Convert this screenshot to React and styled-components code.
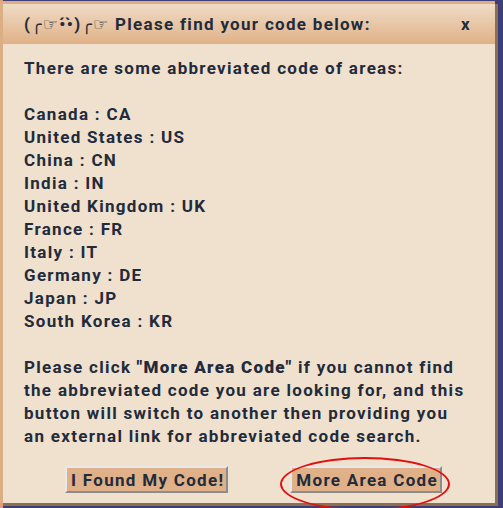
import React from 'react';
import styled, {createGlobalStyle} from 'styled-components';

const Global = createGlobalStyle`
    html, body {
        margin: 0;
        padding: 0;
        background: #4b4f9c;
    }
    body {
        font-family: Roboto, "DejaVu Sans", sans-serif;
    }
`;

const Page = styled.div`
    width: 503px;
    height: 508px;
    padding: 1px 0 0 0;
    box-sizing: border-box;
    background: linear-gradient(to right, #e49a80 0 3px, #3e3e78 3px);
`;

const Dialog = styled.div`
    position: relative;
    width: 495px;
    height: 502px;
    box-sizing: border-box;
    border-top: 3px solid #dcae85;
    border-left: 3px solid #dcae85;
    background: #f0e0ce;
    box-shadow: 3px 3px 0 #8a7050;
    color: #222b3b;
    font-weight: 700;
    font-size: 17px;
    letter-spacing: 1.3px;
    display: flex;
    flex-direction: column;
`;

const Header = styled.div`
    height: 40px;
    display: flex;
    align-items: center;
    justify-content: space-between;
    padding: 0 24px 0 21px;
    background: linear-gradient(to bottom, #efdcc6, #e0b187);
`;

const Close = styled.span`
    font-size: 17px;
`;

const Body = styled.div`
    padding: 13px 0 0 21px;
    line-height: 23px;
`;

const Para = styled.p`
    margin: 0 0 ${p => p.$last ? 18 : 23}px 0;
`;

const Strong = styled.span`
    font-weight: 900;
`;

const Buttons = styled.div`
    display: flex;
    gap: 62px;
    padding-left: 62px;
`;

const Button = styled.button`
    position: relative;
    height: 27px;
    padding: 0 2px 0 4px;
    background: #e0b088;
    color: #222b3b;
    font: inherit;
    font-weight: 700;
    letter-spacing: 1.3px;
    border: 2px solid;
    border-color: #e8e8e8 #8c8c8c #8c8c8c #e8e8e8;
`;

const Ring = styled.span`
    position: absolute;
    left: -12px;
    top: -11px;
    width: 166px;
    height: 50px;
    border: 2px solid #e01010;
    border-radius: 50%;
    pointer-events: none;
`;

const codes = [
    ['Canada', 'CA'],
    ['United States', 'US'],
    ['China', 'CN'],
    ['India', 'IN'],
    ['United Kingdom', 'UK'],
    ['France', 'FR'],
    ['Italy', 'IT'],
    ['Germany', 'DE'],
    ['Japan', 'JP'],
    ['South Korea', 'KR'],
];

export default function App(){
    return (
        <Page>
            <Global/>
            <Dialog>
                <Header>
                    <span>(╭☞•́•̀)╭☞ Please find your code below:</span>
                    <Close>x</Close>
                </Header>
                <Body>
                    <Para>There are some abbreviated code of areas:</Para>
                    <Para>
                        {codes.map(([name, code]) => (
                            <React.Fragment key={code}>{name} : {code}<br/></React.Fragment>
                        ))}
                    </Para>
                    <Para $last>
                        Please click <Strong>"More Area Code"</Strong> if you cannot find<br/>
                        the abbreviated code you are looking for, and this<br/>
                        button will switch to another then providing you<br/>
                        an external link for abbreviated code search.
                    </Para>
                </Body>
                <Buttons>
                    <Button>I Found My Code!</Button>
                    <Button>More Area Code<Ring/></Button>
                </Buttons>
            </Dialog>
        </Page>
    )
}
